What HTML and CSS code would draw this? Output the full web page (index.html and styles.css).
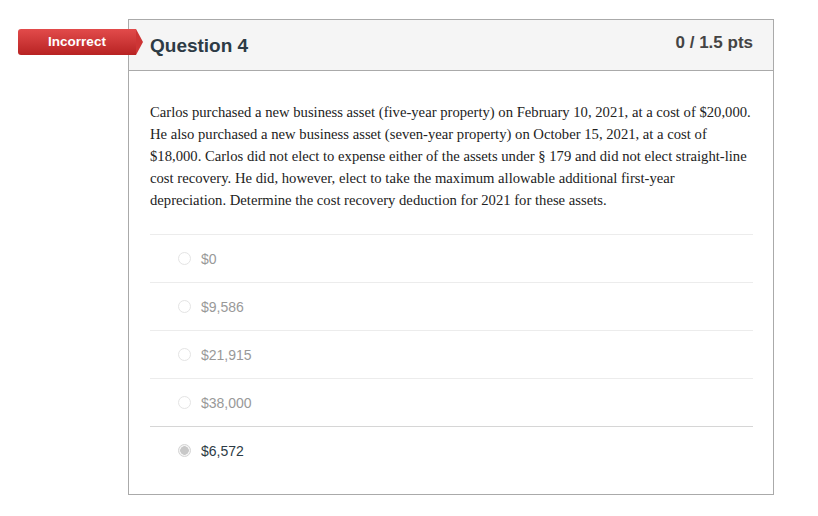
FILE: index.html
```html
<!DOCTYPE html>
<html>
  <head>
    <meta charset="utf-8">
    <title>Question 4</title>
    <link rel="stylesheet" href="styles.css">
  </head>
  <body>
    <div class="quiz">
      <div class="question">
        <span class="question__badge">Incorrect</span>
        <div class="question__header">
          <h2 class="question__name">Question 4</h2>
          <span class="question__points">0 / 1.5 pts</span>
        </div>
        <div class="question__body">
          <p class="question__text">
            Carlos purchased a new business asset (five-year property) on February 10, 2021, at a cost of $20,000.<br>
            He also purchased a new business asset (seven-year property) on October 15, 2021, at a cost of<br>
            $18,000. Carlos did not elect to expense either of the assets under § 179 and did not elect straight-line<br>
            cost recovery. He did, however, elect to take the maximum allowable additional first-year<br>
            depreciation. Determine the cost recovery deduction for 2021 for these assets.
          </p>
          <ul class="answers">
            <li class="answer"><span class="answer__radio"></span>$0</li>
            <li class="answer"><span class="answer__radio"></span>$9,586</li>
            <li class="answer"><span class="answer__radio"></span>$21,915</li>
            <li class="answer"><span class="answer__radio"></span>$38,000</li>
            <li class="answer answer--selected"><span class="answer__radio"></span>$6,572</li>
          </ul>
        </div>
      </div>
    </div>
  </body>
</html>
```

FILE: styles.css
```css
html {
  font-family: "Liberation Sans", Arial, sans-serif;
  background: #fff;
  margin: 0;
  padding: 0;
}

body {
  margin: 0;
  padding: 0;
}

.quiz {
  padding: 19px 0 0 128px;
}

.question {
  position: relative;
  width: 646px;
  box-sizing: border-box;
  border: 1px solid #aaa;
}

.question__badge {
  position: absolute;
  left: -111px;
  top: 9px;
  width: 118px;
  height: 26px;
  line-height: 25px;
  text-align: center;
  color: #fff;
  font-size: 13.5px;
  font-weight: bold;
  background: linear-gradient(#e24b4b, #b82323);
  border-radius: 3px 0 0 3px;
}

.question__badge:after {
  content: '';
  position: absolute;
  right: -7px;
  top: 0;
  border-style: solid;
  border-width: 13px 0 13px 7px;
  border-color: transparent transparent transparent #cd3535;
}

.question__header {
  display: flex;
  justify-content: space-between;
  align-items: center;
  height: 50px;
  padding: 0 20px 0 21px;
  background: #f5f5f5;
  border-bottom: 1px solid #aaa;
  color: #2d3b45;
}

.question__name {
  margin: 0;
  font-size: 19px;
  font-weight: bold;
  margin-top: 2px;
}

.question__points {
  font-size: 17px;
  font-weight: bold;
  color: #444;
  margin-top: -4px;
}

.question__body {
  padding: 30px 20px 20px 21px;
}

.question__text {
  margin: 0 0 23px;
  font-family: "Liberation Serif", "Times New Roman", serif;
  font-size: 14.67px;
  line-height: 22px;
  color: #222;
  white-space: nowrap;
}

.answers {
  list-style: none;
  margin: 0;
  padding: 0;
}

.answer {
  display: flex;
  align-items: center;
  height: 47px;
  border-top: 1px solid #ececec;
  padding-left: 28px;
  font-size: 14px;
  color: #999;
}

.answer--selected {
  border-top-color: #d6d6d6;
  color: #2d3b45;
}

.answer__radio {
  width: 13px;
  height: 13px;
  box-sizing: border-box;
  border: 1px solid #e4e4e4;
  border-radius: 50%;
  margin-right: 10px;
  background: #fff;
}

.answer--selected .answer__radio {
  border-color: #d4d4d4;
  background: radial-gradient(circle, #c8c8c8 0 4px, #f4f4f4 4.5px);
}
```
